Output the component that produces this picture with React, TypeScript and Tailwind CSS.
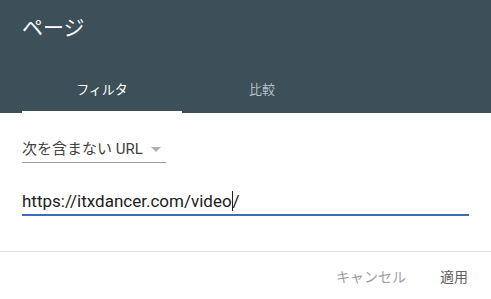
import React from "react";

export default function App() {
  return (
    <div
      className="w-[491px] h-[299px] bg-white overflow-hidden flex flex-col"
      style={{ fontFamily: 'Roboto, "Noto Sans CJK JP", sans-serif' }}
    >
      <div className="bg-[#3d4f58] flex flex-col h-[113px]">
        <div className="pl-[22px] pt-[14px] h-[66px] text-[21px] leading-[28px] text-white">ページ</div>
        <div className="flex pl-[22px] h-[47px]">
          <div className="w-[160px] flex flex-col">
            <div className="flex-1 flex items-center justify-center text-[13px] text-white pt-[2px]">フィルタ</div>
            <div className="h-[2px] bg-white" />
          </div>
          <div className="w-[160px] flex flex-col">
            <div className="flex-1 flex items-center justify-center text-[13px] text-[#b4c0c6] pt-[2px]">比較</div>
            <div className="h-[2px]" />
          </div>
        </div>
      </div>
      <div className="px-[22px] pt-[23px]">
        <div className="w-[144px] h-[27px] border-b border-[#9e9e9e] flex items-center">
          <span className="text-[15px] text-[#424242] leading-[20px]">次を含まない URL</span>
          <svg width="10" height="6" viewBox="0 0 10 6" className="ml-[8px] mt-[1px]">
            <path d="M0 0 L10 0 L5 5 Z" fill="#b0b0b0" />
          </svg>
        </div>
        <div className="mt-[24px] h-[29px] border-b-2 border-[#3d6db5] flex items-center">
          <span className="text-[17px] text-[#212121] leading-[20px]">
            https://itxdancer.com/video
          </span>
          <span className="w-[1px] h-[20px] bg-[#212121]" />
          <span className="text-[17px] text-[#212121] leading-[20px]">/</span>
        </div>
      </div>
      <div className="mt-[35px] border-t border-[#e0e0e0] flex justify-end items-center h-[50px] pr-[23px] gap-[34px] pt-[4px]">
        <span className="text-[14px] text-[#9e9e9e]">キャンセル</span>
        <span className="text-[14px] text-[#616161]">適用</span>
      </div>
    </div>
  );
}
